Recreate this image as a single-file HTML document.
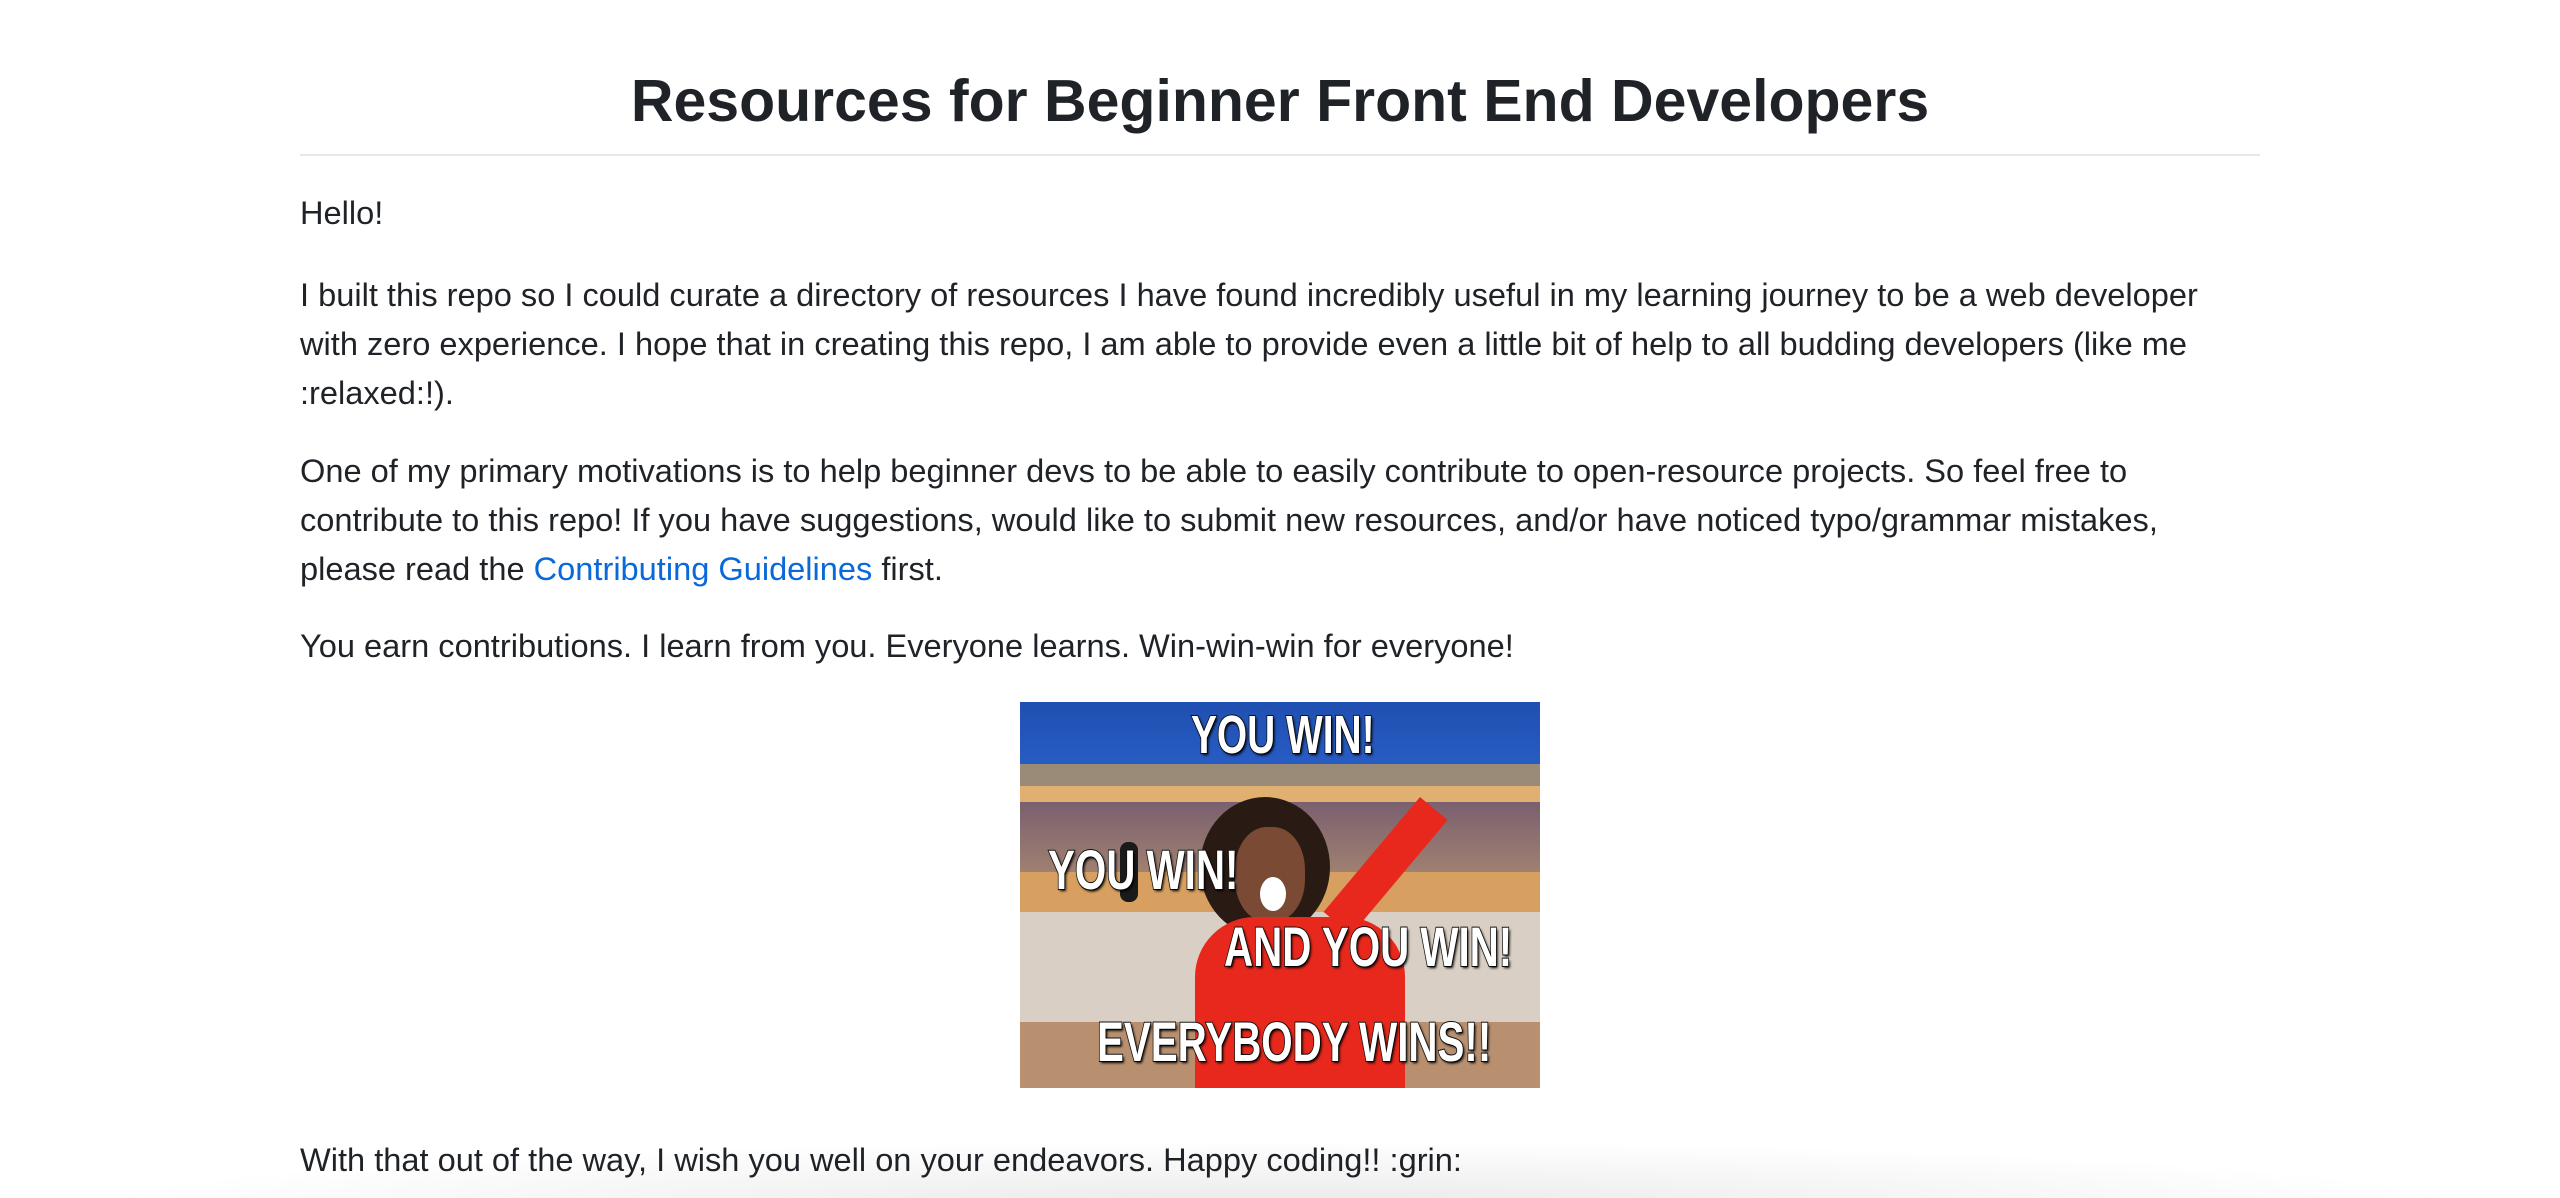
<!DOCTYPE html>
<html><head><meta charset="utf-8">
<style>
html,body{margin:0;padding:0;width:2560px;height:1198px;overflow:hidden;background:#fff;position:relative;font-family:"Liberation Sans",sans-serif;color:#1f2328}
.t{position:absolute;left:300px;font-size:32.6px;line-height:49px;white-space:nowrap}
h1{position:absolute;left:0;width:2560px;top:61px;margin:0;text-align:center;font-size:59px;font-weight:bold;line-height:80px;color:#1f2328}
.hr{position:absolute;left:300px;width:1960px;top:154px;height:2px;background:#e6e8eb}
a{color:#0969da;text-decoration:none}
.img{position:absolute;left:1020px;top:702px;width:520px;height:386px;overflow:hidden;background:#b89a78}
.m{position:absolute;font-family:"Liberation Sans",sans-serif;font-weight:bold;color:#fff;white-space:nowrap;-webkit-text-stroke:2px #111;paint-order:stroke fill;text-shadow:2px 2px 3px #000;transform:scaleX(0.72);transform-origin:left top;line-height:1}
.shade{position:absolute;left:0;top:1130px;width:2560px;height:68px;background:radial-gradient(ellipse 1200px 70px at 1280px 80px,rgba(0,0,0,0.09),rgba(0,0,0,0) 100%)}
</style></head><body>
<h1>Resources for Beginner Front End Developers</h1>
<div class="hr"></div>
<div class="t" style="top:188px">Hello!</div>
<div class="t" style="top:270px">I built this repo so I could curate a directory of resources I have found incredibly useful in my learning journey to be a web developer<br>with zero experience. I hope that in creating this repo, I am able to provide even a little bit of help to all budding developers (like me<br>:relaxed:!).</div>
<div class="t" style="top:446px">One of my primary motivations is to help beginner devs to be able to easily contribute to open-resource projects. So feel free to<br>contribute to this repo! If you have suggestions, would like to submit new resources, and/or have noticed typo/grammar mistakes,<br>please read the <a>Contributing Guidelines</a> first.</div>
<div class="t" style="top:621px">You earn contributions. I learn from you. Everyone learns. Win-win-win for everyone!</div>
<div class="img">
  <div style="position:absolute;left:0;top:0;width:520px;height:75px;background:linear-gradient(180deg,#1f4fb0,#2a5fc8)"></div>
  <div style="position:absolute;left:0;top:62px;width:520px;height:22px;background:#9a8a78"></div>
  <div style="position:absolute;left:0;top:84px;width:520px;height:16px;background:#e0b070"></div>
  <div style="position:absolute;left:0;top:100px;width:520px;height:70px;background:linear-gradient(180deg,#7a6070,#a08070)"></div>
  <div style="position:absolute;left:0;top:170px;width:520px;height:40px;background:#d8a060"></div>
  <div style="position:absolute;left:0;top:210px;width:520px;height:110px;background:#d9cfc5"></div>
  <div style="position:absolute;left:0;top:320px;width:520px;height:66px;background:#b89070"></div>
  <div style="position:absolute;left:180px;top:95px;width:130px;height:140px;border-radius:50%;background:#2a1a14"></div>
  <div style="position:absolute;left:215px;top:125px;width:70px;height:95px;border-radius:45%;background:#7a4a35"></div>
  <div style="position:absolute;left:240px;top:175px;width:26px;height:34px;border-radius:50%;background:#fff"></div>
  <div style="position:absolute;left:175px;top:215px;width:210px;height:171px;background:#e8281c;border-radius:60px 60px 0 0"></div>
  <div style="position:absolute;width:36px;height:150px;background:#e8281c;transform:rotate(40deg);transform-origin:top left;left:400px;top:95px"></div>
  <div style="position:absolute;left:100px;top:140px;width:18px;height:60px;background:#1a1a1a;border-radius:8px"></div>
  <div class="m" style="left:171px;top:6px;font-size:54px">YOU WIN!</div>
  <div class="m" style="left:28px;top:140px;font-size:56px">YOU WIN!</div>
  <div class="m" style="left:204px;top:217px;font-size:56px">AND YOU WIN!</div>
  <div class="m" style="left:77px;top:312px;font-size:56px">EVERYBODY WINS!!</div>
</div>
<div class="t" style="top:1135px">With that out of the way, I wish you well on your endeavors. Happy coding!! :grin:</div>
<div class="shade"></div>
</body></html>
